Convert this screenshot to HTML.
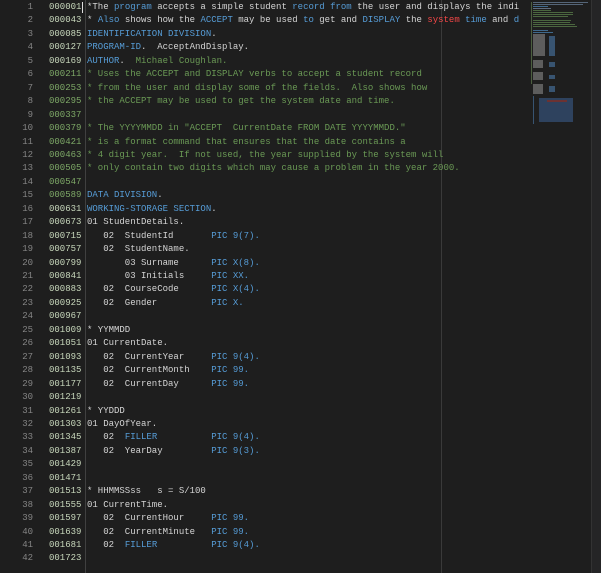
<!DOCTYPE html>
<html><head><meta charset="utf-8"><style>
html,body{margin:0;padding:0;background:#1e1e1e;width:601px;height:573px;overflow:hidden}
.ed{position:absolute;left:0;top:0;width:601px;height:573px;font-family:"Liberation Mono",monospace;font-size:9px;}
.row{position:absolute;left:0;height:13.45px;line-height:13.45px;white-space:pre;width:525px;overflow:hidden}
.ln{position:absolute;left:0;width:33px;text-align:right;color:#858585}
.sq{position:absolute;left:49px;color:#c8d8bc}
.sq.d{color:#7da866}
.tx{position:absolute;left:87px;color:#d4d4d4}
.k{color:#569cd6}.c{color:#6a9955}.r{color:#f44747}
.sep{position:absolute;left:85px;top:0;width:1px;height:573px;background:#404040}
.rul{position:absolute;left:441px;top:0;width:1px;height:573px;background:#3a3a3a}
.mm{position:absolute;left:525px;top:0;width:66px;height:573px;background:#1e1e1e;opacity:.6}
.sb{position:absolute;left:591px;top:0;width:10px;height:573px;background:#252526;border-left:1px solid #333}
.cur{position:absolute;left:82px;top:2px;width:1px;height:11px;background:#ddd}
.b{position:absolute;height:1px}
</style></head><body><div class="ed">
<div class="sep"></div><div class="rul"></div>
<div class="row" style="top:1px"><span class="ln">1</span><span class="sq">000001</span><span class="tx">*The <span class="k">program</span> accepts a simple student <span class="k">record from</span> the user and displays the indi</span></div>
<div class="row" style="top:14.45px"><span class="ln">2</span><span class="sq">000043</span><span class="tx">* <span class="k">Also</span> shows how the <span class="k">ACCEPT</span> may be used <span class="k">to</span> get and <span class="k">DISPLAY</span> the <span class="r">system</span> <span class="k">time</span> and <span class="k">d</span></span></div>
<div class="row" style="top:27.9px"><span class="ln">3</span><span class="sq">000085</span><span class="tx k">IDENTIFICATION DIVISION<span style="color:#d4d4d4">.</span></span></div>
<div class="row" style="top:41.35px"><span class="ln">4</span><span class="sq">000127</span><span class="tx"><span class="k">PROGRAM-ID</span>.  AcceptAndDisplay.</span></div>
<div class="row" style="top:54.8px"><span class="ln">5</span><span class="sq">000169</span><span class="tx"><span class="k">AUTHOR</span>.  <span class="c">Michael Coughlan.</span></span></div>
<div class="row" style="top:68.25px"><span class="ln">6</span><span class="sq d">000211</span><span class="tx c">* Uses the ACCEPT and DISPLAY verbs to accept a student record</span></div>
<div class="row" style="top:81.7px"><span class="ln">7</span><span class="sq d">000253</span><span class="tx c">* from the user and display some of the fields.  Also shows how</span></div>
<div class="row" style="top:95.15px"><span class="ln">8</span><span class="sq d">000295</span><span class="tx c">* the ACCEPT may be used to get the system date and time.</span></div>
<div class="row" style="top:108.6px"><span class="ln">9</span><span class="sq d">000337</span></div>
<div class="row" style="top:122.05px"><span class="ln">10</span><span class="sq d">000379</span><span class="tx c">* The YYYYMMDD in "ACCEPT  CurrentDate FROM DATE YYYYMMDD."</span></div>
<div class="row" style="top:135.5px"><span class="ln">11</span><span class="sq d">000421</span><span class="tx c">* is a format command that ensures that the date contains a</span></div>
<div class="row" style="top:148.95px"><span class="ln">12</span><span class="sq d">000463</span><span class="tx c">* 4 digit year.  If not used, the year supplied by the system will</span></div>
<div class="row" style="top:162.4px"><span class="ln">13</span><span class="sq d">000505</span><span class="tx c">* only contain two digits which may cause a problem in the year 2000.</span></div>
<div class="row" style="top:175.85px"><span class="ln">14</span><span class="sq d">000547</span></div>
<div class="row" style="top:189.3px"><span class="ln">15</span><span class="sq d">000589</span><span class="tx"><span class="k">DATA DIVISION</span>.</span></div>
<div class="row" style="top:202.75px"><span class="ln">16</span><span class="sq">000631</span><span class="tx"><span class="k">WORKING-STORAGE SECTION</span>.</span></div>
<div class="row" style="top:216.2px"><span class="ln">17</span><span class="sq">000673</span><span class="tx">01 StudentDetails.</span></div>
<div class="row" style="top:229.65px"><span class="ln">18</span><span class="sq">000715</span><span class="tx">   02  StudentId       <span class="k">PIC 9(7).</span></span></div>
<div class="row" style="top:243.1px"><span class="ln">19</span><span class="sq">000757</span><span class="tx">   02  StudentName.</span></div>
<div class="row" style="top:256.55px"><span class="ln">20</span><span class="sq">000799</span><span class="tx">       03 Surname      <span class="k">PIC X(8).</span></span></div>
<div class="row" style="top:270px"><span class="ln">21</span><span class="sq">000841</span><span class="tx">       03 Initials     <span class="k">PIC XX.</span></span></div>
<div class="row" style="top:283.45px"><span class="ln">22</span><span class="sq">000883</span><span class="tx">   02  CourseCode      <span class="k">PIC X(4).</span></span></div>
<div class="row" style="top:296.9px"><span class="ln">23</span><span class="sq">000925</span><span class="tx">   02  Gender          <span class="k">PIC X.</span></span></div>
<div class="row" style="top:310.35px"><span class="ln">24</span><span class="sq">000967</span></div>
<div class="row" style="top:323.8px"><span class="ln">25</span><span class="sq">001009</span><span class="tx">* YYMMDD</span></div>
<div class="row" style="top:337.25px"><span class="ln">26</span><span class="sq">001051</span><span class="tx">01 CurrentDate.</span></div>
<div class="row" style="top:350.7px"><span class="ln">27</span><span class="sq">001093</span><span class="tx">   02  CurrentYear     <span class="k">PIC 9(4).</span></span></div>
<div class="row" style="top:364.15px"><span class="ln">28</span><span class="sq">001135</span><span class="tx">   02  CurrentMonth    <span class="k">PIC 99.</span></span></div>
<div class="row" style="top:377.6px"><span class="ln">29</span><span class="sq">001177</span><span class="tx">   02  CurrentDay      <span class="k">PIC 99.</span></span></div>
<div class="row" style="top:391.05px"><span class="ln">30</span><span class="sq">001219</span></div>
<div class="row" style="top:404.5px"><span class="ln">31</span><span class="sq">001261</span><span class="tx">* YYDDD</span></div>
<div class="row" style="top:417.95px"><span class="ln">32</span><span class="sq">001303</span><span class="tx">01 DayOfYear.</span></div>
<div class="row" style="top:431.4px"><span class="ln">33</span><span class="sq">001345</span><span class="tx">   02  <span class="k">FILLER</span>          <span class="k">PIC 9(4).</span></span></div>
<div class="row" style="top:444.85px"><span class="ln">34</span><span class="sq">001387</span><span class="tx">   02  YearDay         <span class="k">PIC 9(3).</span></span></div>
<div class="row" style="top:458.3px"><span class="ln">35</span><span class="sq">001429</span></div>
<div class="row" style="top:471.75px"><span class="ln">36</span><span class="sq">001471</span></div>
<div class="row" style="top:485.2px"><span class="ln">37</span><span class="sq">001513</span><span class="tx">* HHMMSSss   s = S/100</span></div>
<div class="row" style="top:498.65px"><span class="ln">38</span><span class="sq">001555</span><span class="tx">01 CurrentTime.</span></div>
<div class="row" style="top:512.1px"><span class="ln">39</span><span class="sq">001597</span><span class="tx">   02  CurrentHour     <span class="k">PIC 99.</span></span></div>
<div class="row" style="top:525.55px"><span class="ln">40</span><span class="sq">001639</span><span class="tx">   02  CurrentMinute   <span class="k">PIC 99.</span></span></div>
<div class="row" style="top:539px"><span class="ln">41</span><span class="sq">001681</span><span class="tx">   02  <span class="k">FILLER</span>          <span class="k">PIC 9(4).</span></span></div>
<div class="row" style="top:552.45px"><span class="ln">42</span><span class="sq">001723</span></div>
<div class="cur"></div>
<div class="mm">
<div class="b" style="left:6px;top:2px;width:1px;height:82px;background:#6a8a55"></div>
<div class="b" style="left:8px;top:2px;width:55px;background:#7a95b5"></div>
<div class="b" style="left:8px;top:4px;width:50px;background:#7a95b5"></div>
<div class="b" style="left:8px;top:6px;width:15px;background:#569cd6"></div>
<div class="b" style="left:8px;top:8px;width:18px;background:#8aa0c0"></div>
<div class="b" style="left:8px;top:10px;width:18px;background:#6a9955"></div>
<div class="b" style="left:8px;top:12px;width:40px;background:#6a9955"></div>
<div class="b" style="left:8px;top:14px;width:40px;background:#6a9955"></div>
<div class="b" style="left:8px;top:16px;width:35px;background:#6a9955"></div>
<div class="b" style="left:8px;top:20px;width:38px;background:#6a9955"></div>
<div class="b" style="left:8px;top:22px;width:37px;background:#6a9955"></div>
<div class="b" style="left:8px;top:24px;width:42px;background:#6a9955"></div>
<div class="b" style="left:8px;top:26px;width:44px;background:#6a9955"></div>
<div class="b" style="left:8px;top:30px;width:15px;background:#569cd6"></div>
<div class="b" style="left:8px;top:32px;width:20px;background:#569cd6"></div>
<div class="b" style="left:8px;top:34px;width:12px;height:22px;background:#888"></div>
<div class="b" style="left:24px;top:36px;width:6px;height:20px;background:#4a78a8"></div>
<div class="b" style="left:8px;top:60px;width:10px;height:8px;background:#888"></div>
<div class="b" style="left:24px;top:62px;width:6px;height:5px;background:#4a78a8"></div>
<div class="b" style="left:8px;top:72px;width:10px;height:8px;background:#888"></div>
<div class="b" style="left:24px;top:75px;width:6px;height:4px;background:#4a78a8"></div>
<div class="b" style="left:8px;top:84px;width:10px;height:10px;background:#888"></div>
<div class="b" style="left:24px;top:86px;width:6px;height:6px;background:#4a78a8"></div>
<div class="b" style="left:8px;top:96px;width:1px;height:28px;background:#4a78a8"></div>
<div class="b" style="left:14px;top:98px;width:34px;height:24px;background:#3a5a8a"></div>
<div class="b" style="left:22px;top:100px;width:20px;height:2px;background:#a04040"></div>
</div>
<div class="sb"></div>
</div></body></html>
